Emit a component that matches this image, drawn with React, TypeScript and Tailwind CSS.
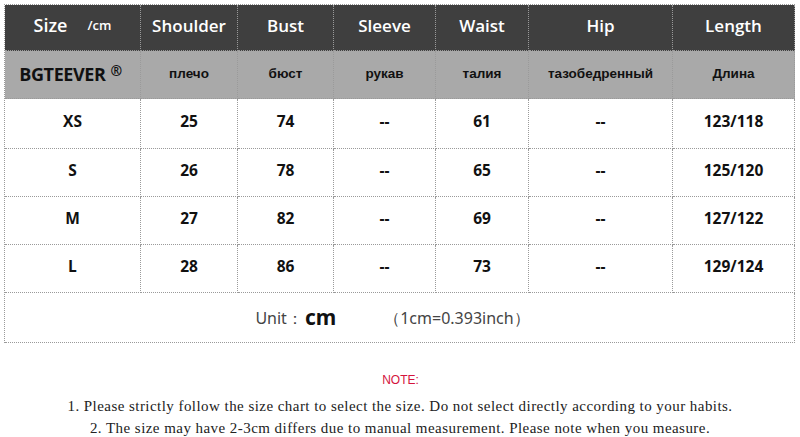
const cols = "grid-cols-[136px_97px_96px_102px_93px_144px_122px]";

const headers = ["Shoulder", "Bust", "Sleeve", "Waist", "Hip", "Length"];
const russian = ["плечо", "бюст", "рукав", "талия", "тазобедренный", "Длина"];

const rows = [
  ["XS", "25", "74", "--", "61", "--", "123/118"],
  ["S", "26", "78", "--", "65", "--", "125/120"],
  ["M", "27", "82", "--", "69", "--", "127/122"],
  ["L", "28", "86", "--", "73", "--", "129/124"],
];

const cell = "flex items-center justify-center border-r border-b border-dotted border-[#9a9a9a]";

export default function App() {
  return (
    <div className="w-[800px] h-[437px] bg-white overflow-hidden pt-1">
      <div className="mx-1 w-[791px] border-l border-t border-dotted border-[#9a9a9a]">
        {/* header */}
        <div className={`grid ${cols} h-[46px] bg-[#3f3f3f] text-white font-['Open_Sans',sans-serif] font-semibold`}>
          <div className={`${cell} gap-5 pb-1`}>
            <span className="text-[18px]">Size</span>
            <span className="text-[13px]">/cm</span>
          </div>
          {headers.map((h) => (
            <div key={h} className={`${cell} text-[17px] pb-1`}>
              {h}
            </div>
          ))}
        </div>

        {/* russian row */}
        <div className={`grid ${cols} h-[48px] bg-[#a9a9a9] text-[#111] font-['Liberation_Sans',sans-serif] font-bold`}>
          <div className={`${cell} font-['Open_Sans',sans-serif] text-[18px] tracking-[-0.4px] pr-1`}>
            BGTEEVER<span className="ml-[5px] text-[14px] -mt-2">®</span>
          </div>
          {russian.map((r) => (
            <div key={r} className={`${cell} text-[13.5px]`}>
              {r}
            </div>
          ))}
        </div>

        {/* data rows */}
        {rows.map((row, i) => (
          <div
            key={row[0]}
            className={`grid ${cols} ${i === 0 ? "h-[50px]" : "h-[48px]"} font-['Open_Sans',sans-serif] font-bold text-[15.5px] text-[#111]`}
          >
            {row.map((v, j) => (
              <div key={j} className={`${cell} pb-1`}>
                {v}
              </div>
            ))}
          </div>
        ))}

        {/* unit row */}
        <div className="h-[50px] flex items-center justify-center border-r border-b border-dotted border-[#9a9a9a] font-['Noto_Sans',sans-serif] text-[#444] pr-[14px]">
          <span className="text-[16px]">Unit：</span>
          <span className="text-[21px] font-bold text-[#111] ml-[2px]">cm</span>
          <span className="text-[16px] ml-[48px]">（1cm=0.393inch）</span>
        </div>
      </div>

      {/* notes */}
      <div className="mt-[30px] flex flex-col items-center">
        <div className="text-[12px] text-[#d4143c] font-['Liberation_Sans',sans-serif] leading-[14px] pl-[1px]">
          NOTE:
        </div>
        <div className="mt-[8px] font-['Liberation_Serif',serif] text-[15px] tracking-[0.45px] text-[#222] leading-[22px] text-center">
          <div>1. Please strictly follow the size chart to select the size. Do not select directly according to your habits.</div>
          <div>2. The size may have 2-3cm differs due to manual measurement. Please note when you measure.</div>
        </div>
      </div>
    </div>
  );
}
